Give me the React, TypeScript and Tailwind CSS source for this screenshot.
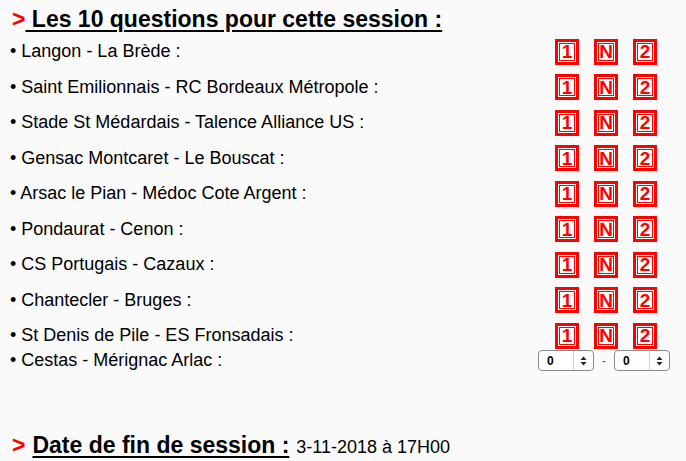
const matches = [
  "Langon - La Brède",
  "Saint Emilionnais - RC Bordeaux Métropole",
  "Stade St Médardais - Talence Alliance US",
  "Gensac Montcaret - Le Bouscat",
  "Arsac le Pian - Médoc Cote Argent",
  "Pondaurat - Cenon",
  "CS Portugais - Cazaux",
  "Chantecler - Bruges",
  "St Denis de Pile - ES Fronsadais",
];

function PickBox({ label }: { label: string }) {
  return (
    <div className="w-[24px] h-[26px] border-[3px] border-[#ff0000] bg-white p-px">
      <div className="w-full h-full border border-[#ff0000] flex items-center justify-center text-[#ff0000] font-bold text-[19px] leading-none">
        {label}
      </div>
    </div>
  );
}

function ScoreSelect() {
  return (
    <div className="w-[56px] h-[21px] rounded-[4px] border border-[#8a8a8a] bg-white flex items-center shadow-[inset_0_1px_0_#fff]">
      <span className="flex-1 pl-[8px] text-[12px] font-bold leading-none text-black">0</span>
      <span className="w-[20px] h-full border-l border-[#d0d0d0] flex items-center justify-center">
        <svg width="7" height="10" viewBox="0 0 7 10">
          <path d="M3.5 0.5 L6.5 4 H0.5 Z" fill="#222" />
          <path d="M3.5 9.5 L6.5 6 H0.5 Z" fill="#222" />
        </svg>
      </span>
    </div>
  );
}

export default function App() {
  return (
    <div
      className="w-[686px] h-[461px] bg-[#fafafa] text-black overflow-hidden"
      style={{ fontFamily: '"Liberation Sans", Arial, sans-serif' }}
    >
      <h2 className="pt-[6px] pl-[12px] text-[23px] font-bold leading-[26px]">
        <span className="text-[#ff0000]">&gt;</span>
        <span className="underline underline-offset-[3px] decoration-[1.5px]"> Les 10 questions pour cette session :</span>
      </h2>

      <div className="mt-[2px] pl-[10px] pr-[29px]">
        {matches.map((m) => (
          <div key={m} className="h-[35.5px] flex items-center justify-between">
            <span className="text-[18px]">• {m} :</span>
            <div className="flex items-center gap-[15px]">
              <PickBox label="1" />
              <PickBox label="N" />
              <PickBox label="2" />
            </div>
          </div>
        ))}
        <div className="h-[22px] flex items-center justify-between -mt-[4px]">
          <span className="text-[18px]">• Cestas - Mérignac Arlac :</span>
          <div className="flex items-center gap-[8px] -mr-[13px]">
            <ScoreSelect />
            <span className="text-[12px] text-[#555]">-</span>
            <ScoreSelect />
          </div>
        </div>
      </div>

      <div className="mt-[56px] pl-[12px] flex items-baseline">
        <span className="text-[23px] font-bold text-[#ff0000]">&gt;</span>
        <span className="text-[23px] font-bold underline underline-offset-[3px] decoration-[1.5px] ml-[7px]">Date de fin de session :</span>
        <span className="text-[18px] ml-[7px]">3-11-2018 à 17H00</span>
      </div>
    </div>
  );
}
